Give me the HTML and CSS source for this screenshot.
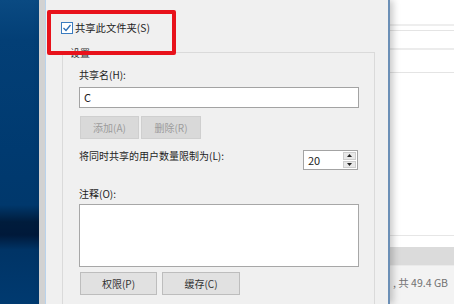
FILE: index.html
```html
<!DOCTYPE html>
<html lang="zh-CN">
<head>
<meta charset="utf-8">
<title>共享</title>
<link rel="stylesheet" href="styles.css">
</head>
<body>
<div class="desktop">
  <div class="explorer">
    <div class="ex-rows">
      <div class="ex-row r1"></div>
      <div class="ex-row r2"></div>
      <div class="ex-row r3"></div>
      <div class="ex-row r4"></div>
    </div>
    <div class="ex-spacer"></div>
    <div class="ex-line"></div>
    <div class="ex-band"></div>
    <div class="ex-status">, 共 49.4 GB</div>
  </div>

  <div class="dialog">
    <div class="tabtop"></div>
    <div class="page">
      <label class="check-row">
        <svg class="checkbox" width="12" height="12" viewBox="0 0 12 12">
          <rect x="0.5" y="0.5" width="11" height="11" fill="#fff" stroke="#3b7cc0"/>
          <polyline points="2.5,6 5,8.5 9.5,3" fill="none" stroke="#2c6db3" stroke-width="1.3"/>
        </svg>
        <span>共享此文件夹(S)</span>
      </label>

      <div class="group">
        <div class="legend"><span>设置</span></div>
        <div class="label first">共享名(H):</div>
        <div class="textbox">C</div>
        <div class="btn-row small">
          <div class="btn disabled w59">添加(A)</div>
          <div class="btn disabled w60">删除(R)</div>
        </div>
        <div class="limit-row">
          <div class="label">将同时共享的用户数量限制为(L):</div>
          <div class="spinner">
            <span class="spin-val">20</span>
            <span class="spin-btns">
              <span class="spin-btn"><svg width="5" height="3" viewBox="0 0 5 3"><polygon points="0,3 5,3 2.5,0" fill="#222"/></svg></span>
              <span class="spin-btn"><svg width="5" height="3" viewBox="0 0 5 3"><polygon points="0,0 5,0 2.5,3" fill="#222"/></svg></span>
            </span>
          </div>
        </div>
        <div class="label comment">注释(O):</div>
        <div class="textarea"></div>
        <div class="btn-row big">
          <div class="btn w77">权限(P)</div>
          <div class="btn w78">缓存(C)</div>
        </div>
      </div>
    </div>
  </div>

  <div class="highlight"></div>
</div>
</body>
</html>
```

FILE: styles.css
```css
* { box-sizing: border-box; }
html, body {
  margin: 0;
  padding: 0;
}
body {
  width: 454px;
  height: 304px;
  overflow: hidden;
  font-family: "Noto Sans CJK SC", "Noto Sans", sans-serif;
  font-size: 10px;
  color: #1a1a1a;
}
.desktop {
  position: relative;
  width: 454px;
  height: 304px;
  background: linear-gradient(to bottom, #0a4a82 0px, #033f76 40px, #003a70 150px, #00386c 205px, #001c3c 222px, #00193a 235px, #003466 250px, #003a70 304px);
}

/* explorer window behind */
.explorer {
  position: absolute;
  left: 388px;
  top: 0;
  width: 66px;
  height: 304px;
  background: #fff;
  display: flex;
  flex-direction: column;
}
.ex-rows { height: 73px; }
.ex-row { border-bottom: 1px solid #e4e4e4; }
.r1 { height: 26px; border-bottom: 2px solid #eeeeee; }
.r2 { height: 5px; }
.r3 { height: 19px; border-bottom: 2px solid #ececec; }
.r4 { height: 23px; }
.ex-spacer { height: 162px; }
.ex-line { height: 12px; border-top: 1px solid #e6e6e6; }
.ex-band { height: 19px; background: #dbdbdb; border-bottom: 1px solid #eaeaea; }
.ex-status {
  flex: 1;
  background: #f3f3f3;
  color: #727272;
  font-size: 10.5px;
  line-height: 14px;
  padding: 10px 0 0 5px;
  white-space: nowrap;
}

/* dialog */
.dialog {
  position: absolute;
  left: 39px;
  top: 0;
  width: 351px;
  height: 304px;
  background: #f0f0f0;
  border-left: 6px solid #d2d2d2;
  border-right: 2px solid #6b8fb6;
  box-shadow: 3px 0 7px rgba(0, 0, 0, 0.22);
  display: flex;
  flex-direction: column;
}
.tabtop {
  height: 5px;
  background: #fcfcfc;
  border-left: 1px solid #b9d3ec;
}
.page {
  flex: 1;
  border-left: 1px solid #b9d3ec;
  padding-left: 15px;
}
.check-row {
  display: flex;
  align-items: center;
  gap: 2px;
  height: 14px;
  margin-top: 21px;
  line-height: 14px;
  font-size: 10.3px;
  color: #1e1e1e;
}
.checkbox { display: block; flex: none; }

.group {
  margin: 17px 0 0 1px;
  width: 313px;
  border: 1px solid #dadada;
  border-bottom: none;
  padding: 0 14px 10px 16px;
  height: 260px;
}
.legend {
  height: 12px;
  margin: -6px 0 0 -10px;
  display: flex;
}
.legend span {
  background: #f0f0f0;
  padding: 0 1px;
  line-height: 12px;
  font-size: 10px;
  color: #333;
}
.label {
  height: 14px;
  line-height: 14px;
  font-size: 10px;
  white-space: nowrap;
  color: #1e1e1e;
}
.label.first { margin-top: 9px; }
.textbox {
  margin-top: 5px;
  height: 21px;
  width: 280px;
  background: #fff;
  border: 1px solid #a3a3a3;
  padding-left: 4px;
  line-height: 19px;
  font-size: 11px;
  color: #222;
}
.btn-row {
  display: flex;
  margin-left: 1px;
}
.btn-row.small { gap: 2px; margin-top: 8px; }
.btn-row.big { gap: 5px; margin-top: 5px; }
.btn {
  height: 23px;
  line-height: 21px;
  text-align: center;
  background: #e1e1e1;
  border: 1px solid #bdbdbd;
  color: #333;
  font-size: 10px;
}
.btn.disabled {
  background: #d9d9d9;
  border-color: #cfcfcf;
  color: #9c9c9c;
}
.w59 { width: 59px; }
.w60 { width: 60px; }
.w77 { width: 77px; }
.w78 { width: 78px; }

.limit-row {
  display: flex;
  justify-content: space-between;
  align-items: flex-start;
  margin-top: 10px;
  width: 280px;
}
.spinner {
  margin-top: 1px;
  margin-right: 1px;
  width: 55px;
  height: 20px;
  background: #fff;
  border: 1px solid #a3a3a3;
  display: flex;
  justify-content: space-between;
}
.spin-val {
  padding-left: 4px;
  line-height: 18px;
  font-size: 11px;
  color: #222;
}
.spin-btns {
  display: flex;
  flex-direction: column;
  width: 13px;
  margin: 1px 1px 1px 0;
  gap: 1px;
}
.spin-btn {
  flex: 1;
  background: #e8e8e8;
  border: 1px solid #cdcdcd;
  display: flex;
  align-items: center;
  justify-content: center;
}
.spin-btn svg { display: block; }

.label.comment { margin-top: 17px; }
.textarea {
  margin-top: 3px;
  width: 280px;
  height: 63px;
  background: #fff;
  border: 1px solid #a7a7a7;
}

.highlight {
  position: absolute;
  left: 47px;
  top: 10px;
  width: 129px;
  height: 45px;
  border: 4px solid #e8121b;
  border-radius: 2px;
}
```
